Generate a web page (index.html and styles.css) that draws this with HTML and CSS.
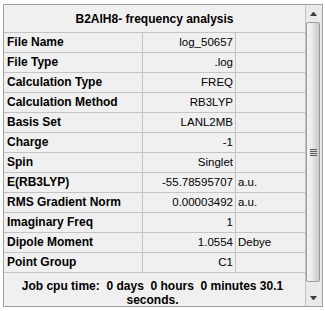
FILE: index.html
```html
<!DOCTYPE html>
<html>
<head>
<meta charset="utf-8">
<link rel="stylesheet" href="styles.css">
</head>
<body>
<div class="frame">
  <div class="grid">
    <div class="title">B2AlH8- frequency analysis</div>
    <div class="row"><div class="label">File Name</div><div class="val">log_50657</div><div class="unit"></div></div>
    <div class="row"><div class="label">File Type</div><div class="val">.log</div><div class="unit"></div></div>
    <div class="row"><div class="label">Calculation Type</div><div class="val">FREQ</div><div class="unit"></div></div>
    <div class="row"><div class="label">Calculation Method</div><div class="val">RB3LYP</div><div class="unit"></div></div>
    <div class="row"><div class="label">Basis Set</div><div class="val">LANL2MB</div><div class="unit"></div></div>
    <div class="row"><div class="label">Charge</div><div class="val">-1</div><div class="unit"></div></div>
    <div class="row"><div class="label">Spin</div><div class="val">Singlet</div><div class="unit"></div></div>
    <div class="row"><div class="label">E(RB3LYP)</div><div class="val">-55.78595707</div><div class="unit">a.u.</div></div>
    <div class="row"><div class="label">RMS Gradient Norm</div><div class="val">0.00003492</div><div class="unit">a.u.</div></div>
    <div class="row"><div class="label">Imaginary Freq</div><div class="val">1</div><div class="unit"></div></div>
    <div class="row"><div class="label">Dipole Moment</div><div class="val">1.0554</div><div class="unit">Debye</div></div>
    <div class="row"><div class="label">Point Group</div><div class="val">C1</div><div class="unit"></div></div>
    <div class="footer">Job cpu time:&nbsp; 0 days&nbsp; 0 hours&nbsp; 0 minutes 30.1<br>seconds.</div>
  </div>
  <div class="scrollbar">
    <div class="btn"><span class="arrow-up"></span></div>
    <div class="thumb"><span class="grip"></span></div>
    <div class="spacer"></div>
    <div class="btn btn-down"><span class="arrow-down"></span></div>
  </div>
</div>
</body>
</html>
```

FILE: styles.css
```css
html, body {
  margin: 0;
  padding: 0;
  background: #ffffff;
}
body {
  font-family: "Liberation Sans", Arial, sans-serif;
  color: #000;
}
.frame {
  margin: 4px 0 0 3px;
  width: 318px;
  height: 301px;
  border: 1px solid #a0a0a0;
  background: #f0f0f0;
  display: flex;
  overflow: hidden;
}
.grid {
  width: 302px;
  display: flex;
  flex-direction: column;
}
.title {
  box-sizing: border-box;
  height: 28px;
  border-right: 1px solid #c4c4c4;
  border-bottom: 1px solid #c4c4c4;
  font-weight: bold;
  font-size: 12px;
  display: flex;
  align-items: center;
  justify-content: center;
  padding-top: 1px;
}
.row {
  display: grid;
  grid-template-columns: 139px 93px 70px;
  height: 20px;
}
.row > div {
  box-sizing: border-box;
  border-right: 1px solid #c4c4c4;
  border-bottom: 1px solid #c4c4c4;
  line-height: 19px;
  white-space: nowrap;
  overflow: hidden;
}
.label {
  font-weight: bold;
  font-size: 12px;
  padding-left: 3px;
}
.val {
  font-size: 11.5px;
  text-align: right;
  padding-right: 2px;
}
.unit {
  font-size: 11.5px;
  padding-left: 2px;
}
.footer {
  box-sizing: border-box;
  flex: 1;
  border-right: 1px solid #c4c4c4;
  font-weight: bold;
  font-size: 12px;
  line-height: 14px;
  text-align: center;
  padding: 6px 4px 0 0;
  overflow: hidden;
}
.scrollbar {
  width: 16px;
  display: flex;
  flex-direction: column;
  background: #eaeaea;
}
.btn {
  height: 17px;
  display: flex;
  align-items: center;
  justify-content: center;
  padding-right: 1px;
}
.btn-down {
  height: 17px;
  padding-top: 1px;
}
.arrow-up {
  width: 1px;
  height: 0;
  border-left: 3px solid transparent;
  border-right: 3px solid transparent;
  border-bottom: 4px solid #404040;
}
.arrow-down {
  width: 1px;
  height: 0;
  border-left: 3px solid transparent;
  border-right: 3px solid transparent;
  border-top: 4px solid #404040;
}
.thumb {
  box-sizing: border-box;
  height: 260px;
  width: 14px;
  margin-left: 0;
  border: 1px solid #9a9a9a;
  border-radius: 2px;
  background: linear-gradient(to right, #f6f6f6 0%, #e9e9e9 45%, #d6d6d6 75%, #cbcbcb 100%);
  display: flex;
  align-items: center;
  justify-content: center;
}
.grip {
  width: 7px;
  height: 7px;
  background: repeating-linear-gradient(to bottom, #5a5a5a 0 1px, #dcdcdc 1px 2px);
}
.spacer {
  flex: 1;
}
```
